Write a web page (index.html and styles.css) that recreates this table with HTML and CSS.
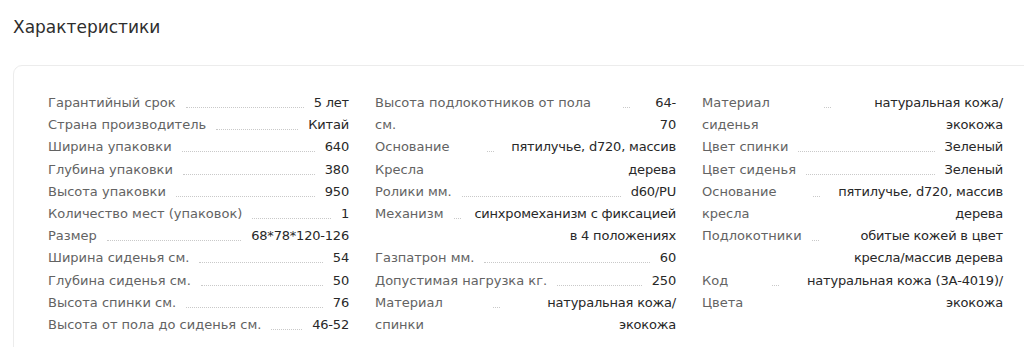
FILE: index.html
```html
<!DOCTYPE html>
<html lang="ru">
<head>
<meta charset="utf-8">
<title>Характеристики</title>
<link rel="stylesheet" href="styles.css">
</head>
<body>
<div class="page">
  <h2 class="title">Характеристики</h2>
  <div class="card">
    <div class="col">
      <div class="row"><span class="label">Гарантийный срок</span><span class="leader"></span><span class="value">5 лет</span></div>
      <div class="row"><span class="label">Страна производитель</span><span class="leader"></span><span class="value">Китай</span></div>
      <div class="row"><span class="label">Ширина упаковки</span><span class="leader"></span><span class="value">640</span></div>
      <div class="row"><span class="label">Глубина упаковки</span><span class="leader"></span><span class="value">380</span></div>
      <div class="row"><span class="label">Высота упаковки</span><span class="leader"></span><span class="value">950</span></div>
      <div class="row"><span class="label">Количество мест (упаковок)</span><span class="leader"></span><span class="value">1</span></div>
      <div class="row"><span class="label">Размер</span><span class="leader"></span><span class="value">68*78*120-126</span></div>
      <div class="row"><span class="label">Ширина сиденья см.</span><span class="leader"></span><span class="value">54</span></div>
      <div class="row"><span class="label">Глубина сиденья см.</span><span class="leader"></span><span class="value">50</span></div>
      <div class="row"><span class="label">Высота спинки см.</span><span class="leader"></span><span class="value">76</span></div>
      <div class="row"><span class="label">Высота от пола до сиденья см.</span><span class="leader"></span><span class="value">46-52</span></div>
    </div>
    <div class="col">
      <div class="row"><span class="label">Высота подлокотников от пола см.</span><span class="leader"></span><span class="value">64-70</span></div>
      <div class="row"><span class="label">Основание Кресла</span><span class="leader"></span><span class="value">пятилучье, d720, массив дерева</span></div>
      <div class="row"><span class="label">Ролики мм.</span><span class="leader"></span><span class="value">d60/PU</span></div>
      <div class="row"><span class="label">Механизм</span><span class="leader"></span><span class="value">синхромеханизм с фиксацией в 4 положениях</span></div>
      <div class="row"><span class="label">Газпатрон мм.</span><span class="leader"></span><span class="value">60</span></div>
      <div class="row"><span class="label">Допустимая нагрузка кг.</span><span class="leader"></span><span class="value">250</span></div>
      <div class="row"><span class="label">Материал спинки</span><span class="leader"></span><span class="value">натуральная кожа/<wbr>экокожа</span></div>
    </div>
    <div class="col">
      <div class="row"><span class="label">Материал сиденья</span><span class="leader"></span><span class="value">натуральная кожа/<wbr>экокожа</span></div>
      <div class="row"><span class="label">Цвет спинки</span><span class="leader"></span><span class="value">Зеленый</span></div>
      <div class="row"><span class="label">Цвет сиденья</span><span class="leader"></span><span class="value">Зеленый</span></div>
      <div class="row"><span class="label">Основание кресла</span><span class="leader"></span><span class="value">пятилучье, d720, массив дерева</span></div>
      <div class="row"><span class="label">Подлокотники</span><span class="leader"></span><span class="value">обитые кожей в цвет кресла/массив дерева</span></div>
      <div class="row"><span class="label">Код Цвета</span><span class="leader"></span><span class="value">натуральная кожа (3А-4019)/<wbr>экокожа</span></div>
    </div>
  </div>
</div>
</body>
</html>
```

FILE: styles.css
```css
html, body {
  margin: 0;
  padding: 0;
  overflow: hidden;
  background: #ffffff;
}

body {
  font-family: "DejaVu Sans", "Liberation Sans", sans-serif;
  color: #333333;
}

.page {
  padding: 16px 0 0 13px;
}

.title {
  margin: 0 0 27px 0;
  font-size: 17px;
  line-height: 22px;
  font-weight: normal;
  color: #2e2e2e;
}

.card {
  display: grid;
  grid-template-columns: repeat(3, 301px);
  column-gap: 26px;
  width: max-content;
  padding: 26px 34px 30px 34px;
  border: 1px solid #ececec;
  border-radius: 9px;
}

.col {
  display: flex;
  flex-direction: column;
}

.row {
  display: flex;
  align-items: flex-start;
  font-size: 13px;
  line-height: 22.2px;
}

.label {
  flex: 0 1 auto;
  color: #636363;
}

.leader {
  flex: 1 0 7px;
  height: 15px;
  margin: 0 10px;
  border-bottom: 1px dotted #c9c9c9;
}

.value {
  flex: 0 1 auto;
  text-align: right;
  letter-spacing: -0.2px;
  color: #282828;
}
```
